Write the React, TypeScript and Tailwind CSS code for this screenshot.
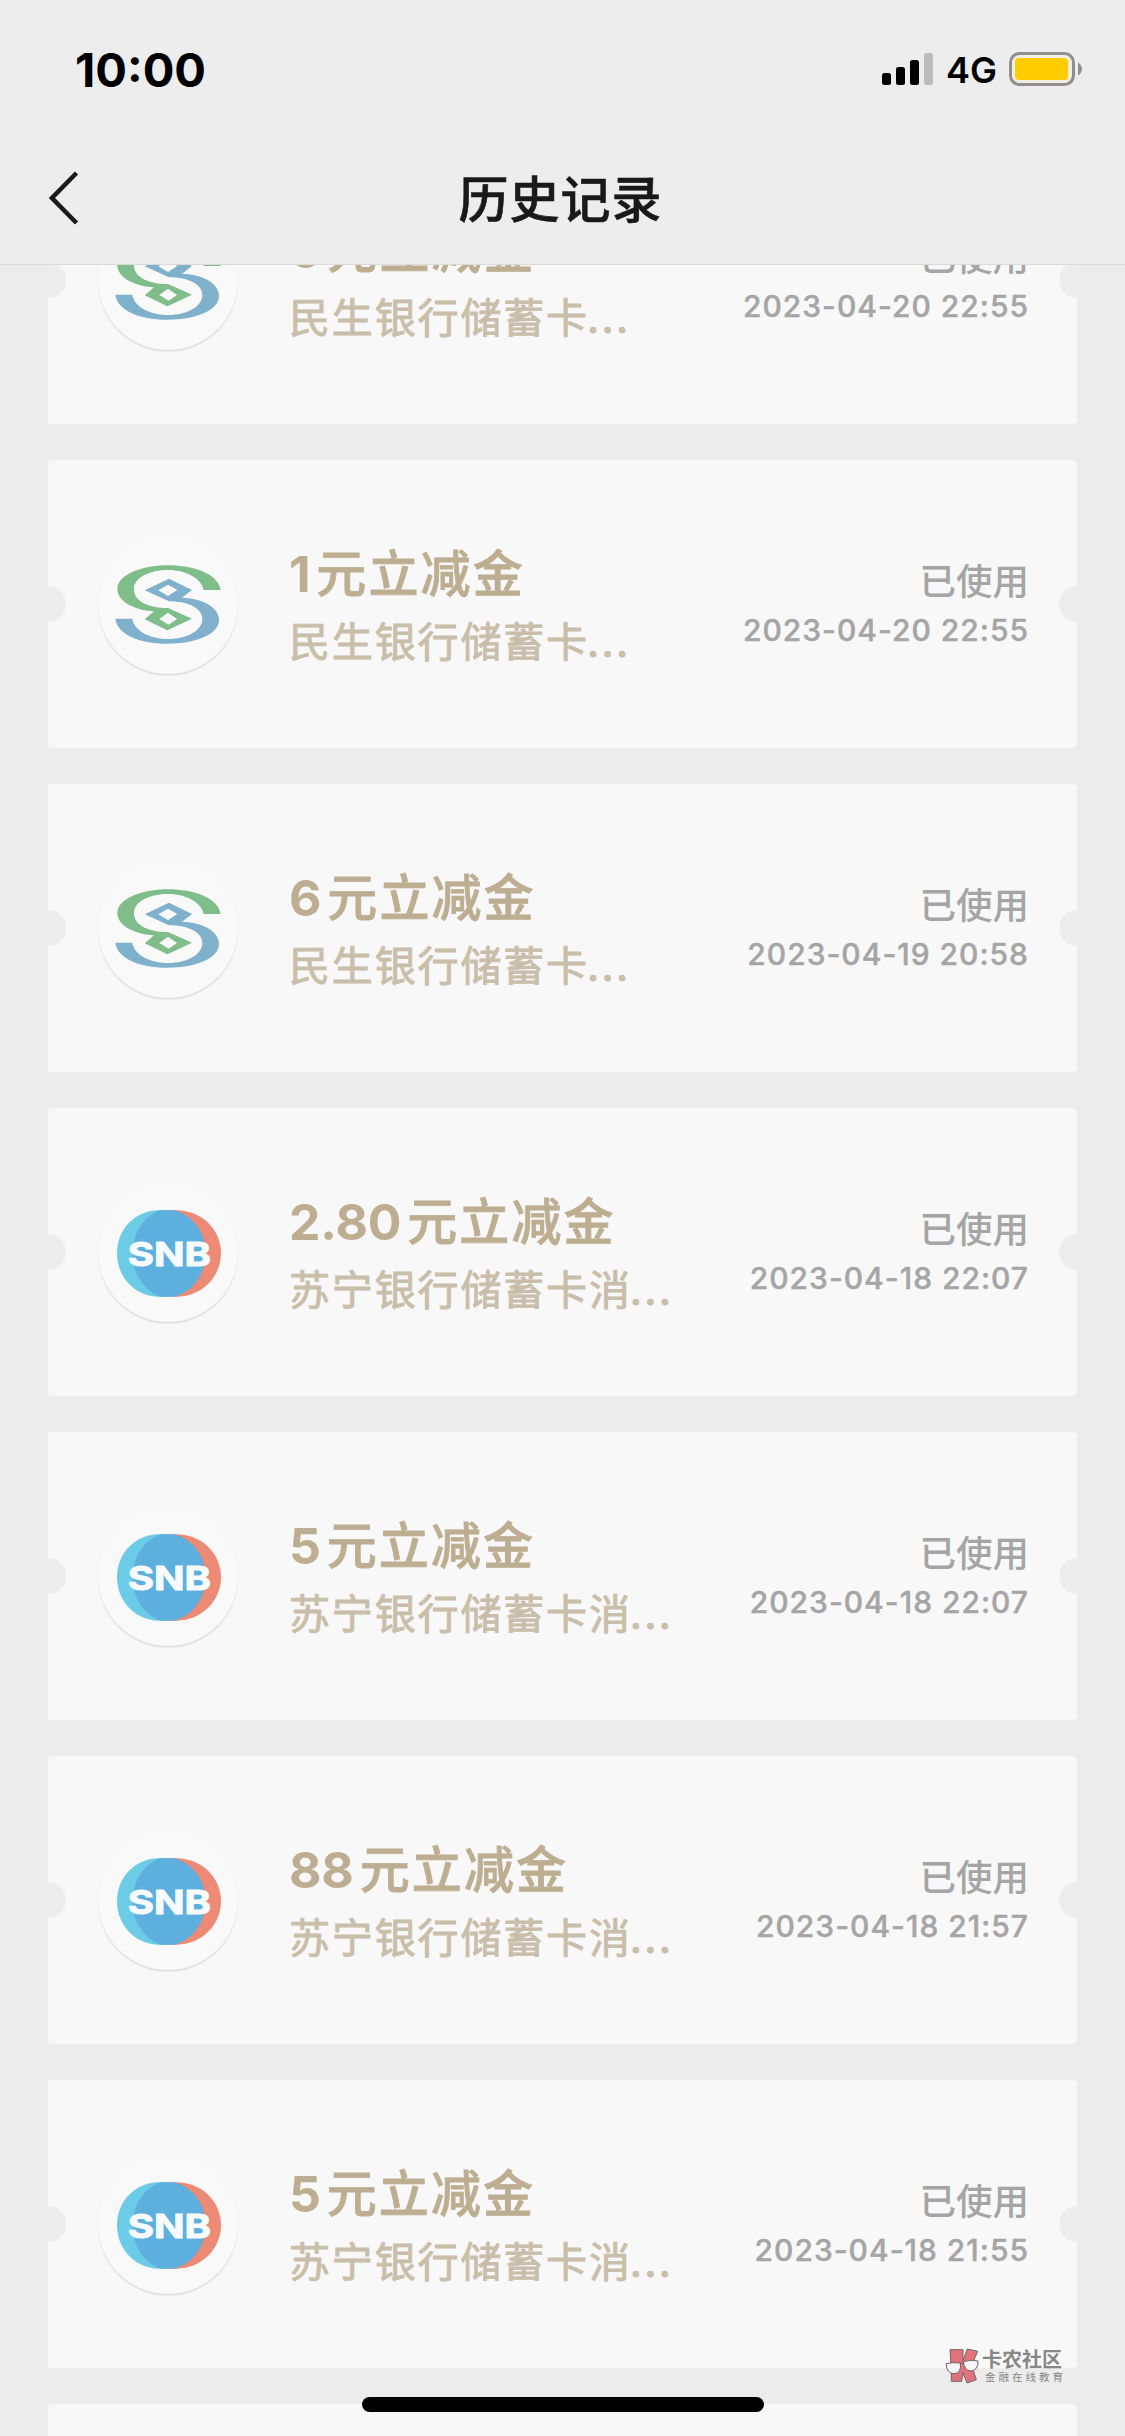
type Bank = "minsheng" | "suning";

type Coupon = {
  amount: string;
  bank: Bank;
  time: string;
};

const coupons: Coupon[] = [
  { amount: "6", bank: "minsheng", time: "2023-04-20 22:55" },
  { amount: "1", bank: "minsheng", time: "2023-04-20 22:55" },
  { amount: "6", bank: "minsheng", time: "2023-04-19 20:58" },
  { amount: "2.80", bank: "suning", time: "2023-04-18 22:07" },
  { amount: "5", bank: "suning", time: "2023-04-18 22:07" },
  { amount: "88", bank: "suning", time: "2023-04-18 21:57" },
  { amount: "5", bank: "suning", time: "2023-04-18 21:55" },
];

const bankText: Record<Bank, string> = {
  minsheng: "民生银行储蓄卡",
  suning: "苏宁银行储蓄卡消",
};

function MinshengLogo() {
  return (
    <svg className="h-[79px] w-[106px]" viewBox="225 343 318 237" fillRule="evenodd">
      <path
        fill="#7fbe8b"
        d="M542 418C535 370 460 344 385 344C300 344 232 375 232 415C232 455 290 480 342 482L314 506L382 539L456 504L384 472C330 472 282 455 282 415C282 380 330 358 385 358C440 358 485 385 491 418ZM358 505L384 486L411 505L386 522Z"
      />
      <path
        fill="#7fb0cc"
        d="M314 419L387 384L456 418L426 441C480 443 537 465 537 508C537 550 470 579 382 579C295 579 232 550 226 504L277 504C282 540 330 565 385 565C440 565 487 540 487 505C487 470 440 452 387 452ZM355 419L384 402L412 418L384 436Z"
      />
    </svg>
  );
}

function SuningLogo() {
  return (
    <svg className="mt-[3px] ml-[2px] h-[87px] w-[104px]" viewBox="231 331 312 261">
      <path
        fill="#ec8a75"
        d="M410 332C485 332 543 390 543 461C543 532 485 591 410 591H370V332Z"
      />
      <path
        fill="#6ccbe6"
        d="M350 332C283 336 231 390 231 461C231 532 283 587 350 591H388V332Z"
      />
      <path
        fill="#5db0de"
        d="M362 332H402C456 345 497 396 497 461C497 527 456 578 402 591H362C315 575 278 527 278 461C278 396 315 348 362 332Z"
      />
      <text
        x="263"
        y="498"
        textLength="250"
        lengthAdjust="spacingAndGlyphs"
        fill="#f7fbfd"
        stroke="#f7fbfd"
        strokeWidth="3"
        className="font-[Inter] text-[100px] font-bold"
      >
        SNB
      </text>
    </svg>
  );
}

function CouponCard({ amount, bank, time }: Coupon) {
  return (
    <article className="relative flex h-[288px] shrink-0 items-center overflow-hidden rounded-[4px] bg-[#f8f8f8] pr-[48px] pl-[50px]">
      <span className="absolute top-[126px] -left-[18px] size-[36px] rounded-full bg-[#ededed]" />
      <span className="absolute top-[126px] -right-[18px] size-[36px] rounded-full bg-[#ededed]" />
      <div className="flex size-[140px] shrink-0 items-center justify-center rounded-full bg-[#f9f9f9] shadow-[0_1.5px_1.5px_rgba(0,0,0,0.12)]">
        {bank === "minsheng" ? <MinshengLogo /> : <SuningLogo />}
      </div>
      <div className="ml-[51px] h-[136px] flex-1 whitespace-nowrap">
        <h2 className="h-[69px] text-[50px] leading-[68px] font-medium tracking-[2.1px] text-[#bdae92] [-webkit-text-stroke:0.8px_#bdae92]">
          <span className="mr-[6px] font-[Inter] font-bold tracking-[-0.2px] [-webkit-text-stroke:0px]">{amount}</span>
          元立减金
        </h2>
        <p className="h-[68px] text-[41px] leading-[68px] tracking-[1.85px] text-[#c9bea9] [-webkit-text-stroke:0.9px_#c9bea9]">
          {bankText[bank]}
          <span className="-ml-[2px] font-[Inter] text-[40px] font-medium tracking-[2.4px]">...</span>
        </p>
      </div>
      <div className="h-[96px] shrink-0 text-right text-[#a5a5a5]">
        <p className="h-[50px] text-[36.5px] leading-[48px] font-medium">已使用</p>
        <p className="h-[49px] font-[Inter] text-[30px] leading-[49px] font-medium tracking-[1px] [-webkit-text-stroke:0.4px_#a5a5a5]">{time}</p>
      </div>
    </article>
  );
}

function StatusBar() {
  return (
    <div className="flex h-[138px] items-center justify-between pr-[43px] pl-[75px] text-black">
      <time className="font-[Inter] text-[47px] leading-none font-bold">10:00</time>
      <div className="flex items-center">
        <svg className="h-[32px] w-[51px]" viewBox="0 0 51 32">
          <rect y="20" width="9" height="12" rx="2.5" />
          <rect x="14" y="14" width="9" height="18" rx="2.5" />
          <rect x="28" y="7" width="9" height="25" rx="2.5" />
          <rect x="42" width="9" height="32" rx="2.5" fill="#bbbbbb" />
        </svg>
        <span className="ml-[13px] w-[50px] pt-[2px] font-[Inter] text-[36px] leading-none font-semibold">4G</span>
        <svg className="ml-[13px] h-[34px] w-[73px]" viewBox="0 0 73 34">
          <rect x="1.5" y="1.5" width="63" height="31" rx="9" fill="#f3efe0" stroke="#8f8f8f" strokeWidth="3" />
          <rect x="6" y="6" width="53" height="22" rx="4" fill="#ffcc00" />
          <path d="M69 10.5Q73 13 73 17T69 23.5Z" fill="#8f8f8f" />
        </svg>
      </div>
    </div>
  );
}

function Watermark() {
  return (
    <div className="absolute top-[2348px] left-[945px] flex gap-[3px] text-[#878787]">
      <svg className="h-[36px] w-[34px]" viewBox="0 0 102 108">
        <g stroke="#6f6464" strokeWidth="3" strokeLinejoin="round">
          <path
            fill="#e2737d"
            d="M15 5H54V38L67 3L98 10L80 52L94 95L66 105L54 74L50 100H19V70Z"
          />
          <path fill="#f7f7f7" d="M3 47Q22 42 46 45Q50 76 27 77Q5 76 3 47Z" />
          <path fill="#f7f7f7" d="M55 41Q78 34 99 39Q100 68 76 69Q58 67 55 41Z" />
          <path fill="none" d="M46 49Q50 43 56 46" />
        </g>
      </svg>
      <div className="whitespace-nowrap">
        <p className="h-[22px] text-[20px] leading-[22px] font-bold">卡农社区</p>
        <p className="ml-[3px] h-[13px] text-[10.5px] leading-[13px] tracking-[3px]">金融在线教育</p>
      </div>
    </div>
  );
}

export default function App() {
  return (
    <main className="relative flex h-[2436px] w-[1125px] flex-col overflow-hidden bg-[#ececec] font-['Noto_Sans_CJK_SC',sans-serif]">
      <header className="h-[265px] shrink-0 border-b border-[#dadada] bg-[#ededed]">
        <StatusBar />
        <nav className="grid h-[120px] grid-cols-[1fr_auto_1fr] items-center">
          <svg className="ml-[49px] h-[54px] w-[30px]" viewBox="0 0 30 54" fill="none" stroke="#1a1a1a" strokeWidth="4.5">
            <path d="M27.500 2L3 27L27.500 52" />
          </svg>
          <h1 className="mr-[4px] mb-[5px] text-[50px] leading-[70px] font-medium tracking-[1px] text-[#191919] [-webkit-text-stroke:0.6px_#191919]">
            历史记录
          </h1>
        </nav>
      </header>
      <section className="min-h-0 flex-1 overflow-hidden">
        <div className="-mt-[129px] flex flex-col gap-[36px] pr-[48px] pl-[48px]">
          {coupons.map((coupon, i) => (
            <CouponCard key={i} {...coupon} />
          ))}
          <div className="h-[288px] shrink-0 rounded-[4px] bg-[#f8f8f8]" />
        </div>
      </section>
      <Watermark />
      <div className="absolute top-[2397px] left-[362px] h-[15px] w-[402px] rounded-full bg-black" />
    </main>
  );
}
